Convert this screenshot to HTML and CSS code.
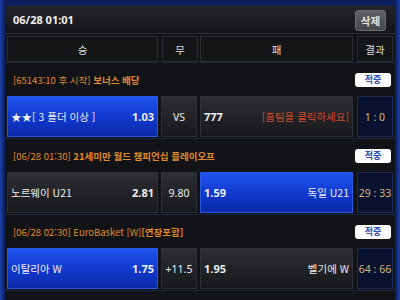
FILE: index.html
```html
<!DOCTYPE html>
<html lang="ko">
<head>
<meta charset="utf-8">
<link rel="stylesheet" href="styles.css">
</head>
<body>
<div class="frame">
  <div class="top">
    <span class="time">06/28 01:01</span>
    <button class="del">삭제</button>
  </div>
  <div class="cols">
    <div class="hc">승</div>
    <div class="hc">무</div>
    <div class="hc">패</div>
    <div class="hc">결과</div>
  </div>

  <div class="section">
    <div class="title">
      <span class="tt">[65143:10 후 시작] <b>보너스 배당</b></span>
      <span class="badge win">적중</span>
    </div>
    <div class="row">
      <div class="cell pick sel"><span>★★[ 3 폴더 이상 ]</span><b>1.03</b></div>
      <div class="cell mid">VS</div>
      <div class="cell pick"><b>777</b><span class="red">[홈팀을 클릭하세요]</span></div>
      <div class="res">1 : 0</div>
    </div>
  </div>

  <div class="section">
    <div class="title">
      <span class="tt">[06/28 01:30] <b>21세미만 월드 챔피언십 플레이오프</b></span>
      <span class="badge win">적중</span>
    </div>
    <div class="row">
      <div class="cell pick"><span>노르웨이 U21</span><b>2.81</b></div>
      <div class="cell mid">9.80</div>
      <div class="cell pick sel"><b>1.59</b><span>독일 U21</span></div>
      <div class="res">29 : 33</div>
    </div>
  </div>

  <div class="section">
    <div class="title">
      <span class="tt">[06/28 02:30] EuroBasket [W]<b>[연장포함]</b></span>
      <span class="badge win">적중</span>
    </div>
    <div class="row">
      <div class="cell pick sel"><span>이탈리아 W</span><b>1.75</b></div>
      <div class="cell mid">+11.5</div>
      <div class="cell pick"><b>1.95</b><span>벨기에 W</span></div>
      <div class="res">64 : 66</div>
    </div>
  </div>

  <div class="section">
    <div class="title">
      <span class="tt">[06/28 02:45] <b>아일랜드 프리미어 디비전</b></span>
      <span class="badge lose">낙첨</span>
    </div>
  </div>
</div>
</body>
</html>
```
FILE: styles.css
```css
* { box-sizing: border-box; }
html, body { margin: 0; padding: 0; }
body {
  width: 400px;
  height: 300px;
  overflow: hidden;
  background: linear-gradient(to right, #1c3fa8 0, #0c1d5a 5px, #0c1d5a 395px, #1c3fa8 400px);
  font-family: "Noto Sans CJK KR", "Noto Sans", sans-serif;
  color: #e8e8e8;
}
.frame {
  margin: 6px 5px 0;
  background: #121316;
  height: 294px;
}
.top {
  height: 28px;
  display: flex;
  align-items: center;
  justify-content: space-between;
  padding: 0 9px 0 8px;
  background: linear-gradient(#222428, #141518);
  border-bottom: 1px solid #2c2f36;
}
.time {
  font-family: "Noto Sans", sans-serif;
  font-weight: bold;
  font-size: 11px;
  color: #f2f2f2;
}
.del {
  font-family: "Noto Sans CJK KR", sans-serif;
  font-size: 10.5px;
  font-weight: bold;
  color: #e6e6e6;
  background: linear-gradient(#5f6166, #46484c);
  border: 1px solid #6a6c70;
  border-radius: 3px;
  height: 21px;
  width: 31px;
  padding: 0;
  margin-top: 2px;
  line-height: 19px;
}
.cols {
  display: grid;
  grid-template-columns: 151px 36px 153px 36px;
  column-gap: 3px;
  margin-top: 2px;
  padding: 0 2px;
}
.cols .hc:nth-child(2) { margin-left: 1px; margin-right: -1px; }
.cols .hc:nth-child(4) { margin-left: 1px; margin-right: -1px; }
.hc {
  height: 26px;
  background: #141517;
  border: 1px solid #2a2c31;
  display: flex;
  align-items: center;
  justify-content: center;
  font-size: 10.5px;
  color: #dcdcdc;
}
.section {
  padding: 0 2px;
  border-top: 1px solid #1a2340;
}
.title {
  height: 33px;
  display: flex;
  align-items: center;
  justify-content: space-between;
  padding: 0 2px 0 6px;
}
.tt {
  font-size: 9.5px;
  color: #e08a2c;
  white-space: nowrap;
}
.tt b { font-weight: bold; }
.badge {
  width: 36px;
  height: 14px;
  background: #ffffff;
  border-radius: 3px;
  font-size: 9px;
  font-weight: bold;
  line-height: 14px;
  text-align: center;
}
.badge.win { color: #2a4fb0; }
.badge.lose { color: #d03030; }
.row {
  display: grid;
  grid-template-columns: 151px 36px 153px 36px;
  column-gap: 3px;
  height: 41px;
  margin-bottom: 1px;
}
.cell {
  background: linear-gradient(#2c2e33, #17181b);
  border: 1px solid #2e3035;
  display: flex;
  align-items: center;
  font-size: 10.5px;
  color: #eeeeee;
  white-space: nowrap;
}
.pick {
  justify-content: space-between;
  padding: 0 3px 0 3px;
}
.pick b {
  font-family: "Noto Sans", sans-serif;
  font-weight: bold;
  font-size: 11px;
}
.sel {
  background: linear-gradient(#1f55f0, #1035c8 60%, #0c2ba8);
  border-color: #2b5ae0;
}
.mid {
  justify-content: center;
  font-family: "Noto Sans", sans-serif;
  font-size: 10.5px;
}
.red { color: #cf4a2c; }
.res {
  margin-left: 1px;
  margin-right: -1px;
  background: #0b1230;
  border: 1px solid #1d2a52;
  display: flex;
  align-items: center;
  justify-content: center;
  font-family: "Noto Sans", sans-serif;
  font-size: 10.5px;
  color: #cdb97a;
  white-space: nowrap;
}
```
